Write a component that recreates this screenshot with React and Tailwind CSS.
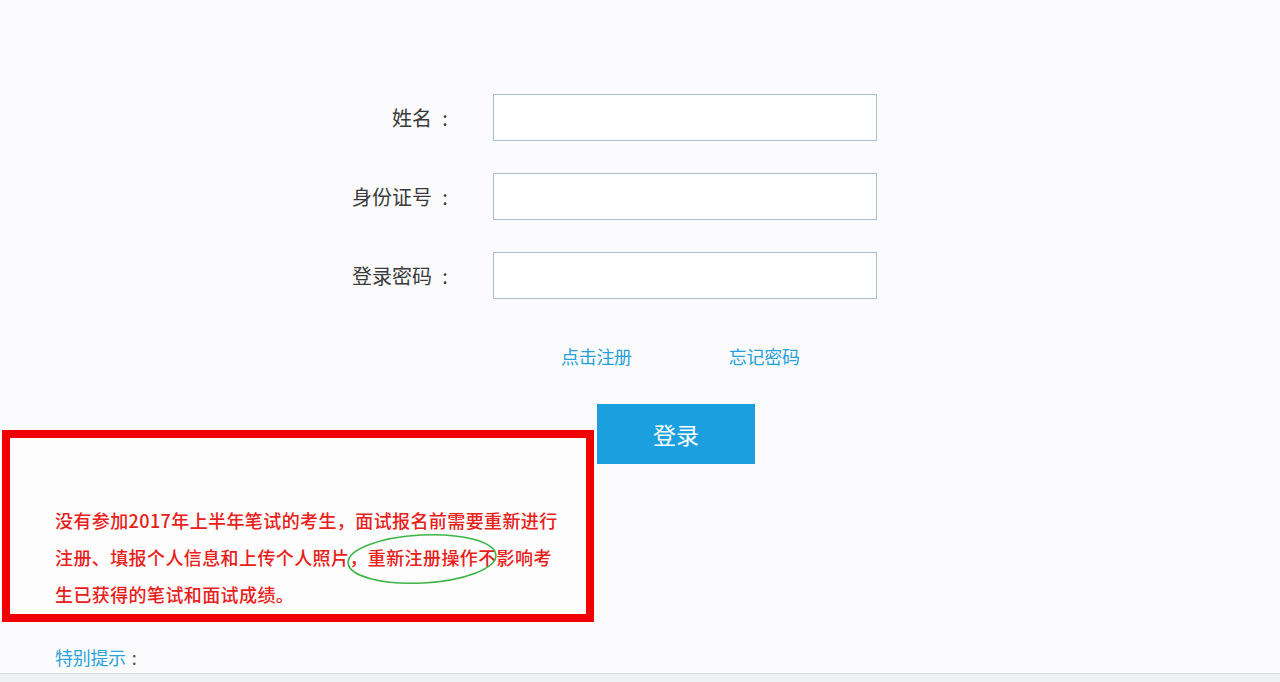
export default function App() {
  const fields = ['姓名', '身份证号', '登录密码'];

  return (
    <main
      className="h-[682px] overflow-hidden bg-[#fbfbfd] flex flex-col"
      style={{ fontFamily: '"Noto Sans CJK SC", "Noto Sans", sans-serif' }}
    >
      {/* login form */}
      <div className="pt-[94px] flex flex-col gap-[32px]">
        {fields.map((label) => (
          <div key={label} className="flex items-center">
            <label className="w-[458px] flex justify-end items-center text-[20px] leading-none text-[#3a3a3a]">
              <span>{label}</span>
              <span className="w-[26px] text-center">:</span>
            </label>
            <input
              type={label === '登录密码' ? 'password' : 'text'}
              className="ml-[35px] w-[384px] h-[47px] border border-[#a9bfcf] bg-white outline-none"
            />
          </div>
        ))}
      </div>

      <div className="mt-[45px] flex items-center h-[24px] text-[18px] text-[#279fd8] tracking-[-0.3px]">
        <a className="ml-[561px]">点击注册</a>
        <a className="ml-[97px]">忘记密码</a>
      </div>

      {/* notice + button */}
      <div className="mt-[36px] flex items-start">
        <div className="ml-[2px] w-[592px] flex flex-col">
          <div className="relative mt-[26px] h-[192px] border-[8px] border-[#f00000] bg-[#fdfdfe] pl-[45px] pt-[64px]">
            <p className="text-[18px] leading-[37px] font-medium text-[#e8201a] tracking-[0.4px] whitespace-nowrap">
              没有参加2017年上半年笔试的考生，面试报名前需要重新进行
              <br />
              注册、填报个人信息和上传个人照片，重新注册操作不影响考
              <br />
              生已获得的笔试和面试成绩。
            </p>
            <svg
              className="absolute left-[336px] top-[94px] w-[152px] h-[54px]"
              viewBox="0 0 152 54"
              fill="none"
            >
              <ellipse
                cx="76"
                cy="27"
                rx="74"
                ry="24"
                stroke="#3cb445"
                strokeWidth="1.6"
                transform="rotate(-3 76 27)"
              />
            </svg>
          </div>
          <p className="mt-[23px] ml-[53px] h-[24px] leading-[24px] text-[18px] text-[#2aa2da] tracking-[-0.3px]">
            特别提示<span className="ml-[6px] text-[#555]">:</span>
          </p>
        </div>
        <button className="ml-[3px] w-[158px] h-[60px] bg-[#1b9fdf] text-white text-[23px] leading-none">
          登录
        </button>
      </div>

      <div className="mt-[4px] border-t border-[#d9dbe0] flex-1 bg-[#f0f1f5]" />
    </main>
  );
}
